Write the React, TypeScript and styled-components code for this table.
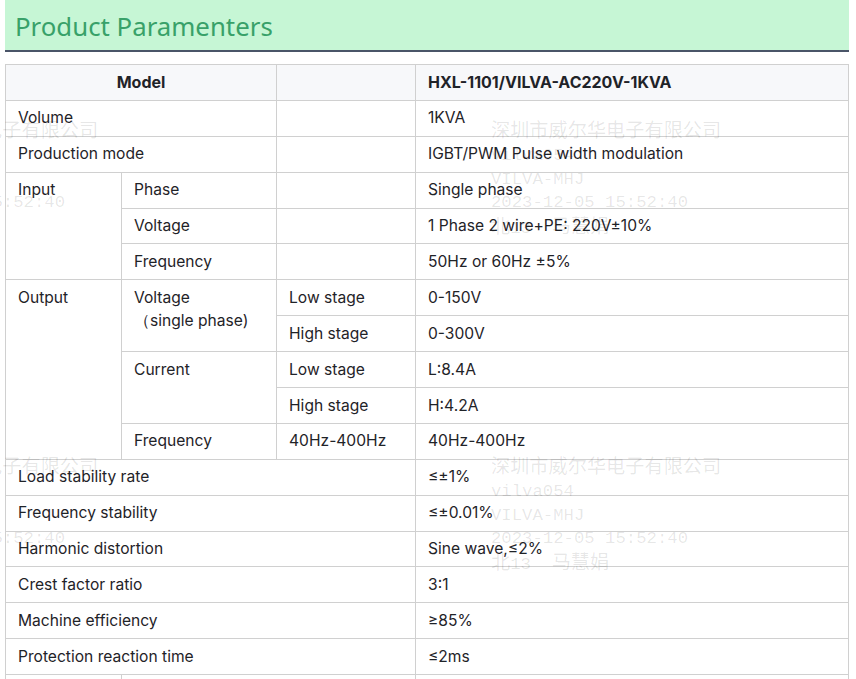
import React from "react";
import styled, { createGlobalStyle } from "styled-components";

const Global = createGlobalStyle`
  html, body { margin: 0; padding: 0; background: #fff; }
  body { font-family: Inter, "Noto Sans", sans-serif; color: #1f2328; }
`;

const Page = styled.div`
  position: relative;
  width: 844px;
  padding: 0 0 0 5px;
  height: 679px;
  overflow: hidden;
`;

const TitleBar = styled.div`
  background: #c6f6d5;
  border-bottom: 2px solid #4a5568;
  height: 50px;
  display: flex;
  align-items: center;
  padding-left: 10px;
  margin-bottom: 12px;
`;

const Title = styled.h2`
  margin: 0;
  font-family: "Noto Sans", sans-serif;
  font-weight: 400;
  font-size: 25.8px;
  color: #38a169;
  line-height: 1;
  padding-top: 4px;
`;

const Table = styled.table`
  width: 843px;
  border-collapse: collapse;
  table-layout: fixed;
  font-size: 15.6px;
`;

const HeadRow = styled.tr`
  background: #f7f8fa;
  font-size: 16px;
`;

const Cell = styled.td<{ $bold?: boolean; $center?: boolean }>`
  border: 1px solid #d0d0d0;
  padding: 5.5px 12px 6.4px 12px;
  line-height: 23px;
  vertical-align: top;
  text-align: ${(p) => (p.$center ? "center" : "left")};
  font-weight: ${(p) => (p.$bold ? 700 : 400)};
  white-space: nowrap;
`;

const Overlay = styled.div`
  position: absolute;
  inset: 0;
  pointer-events: none;
  overflow: hidden;
`;

const Mark = styled.div`
  position: absolute;
  font-family: "Liberation Mono", "Noto Sans CJK SC", monospace;
  font-size: 17.3px;
  line-height: 23.3px;
  color: rgba(0, 0, 0, 0.1);
  white-space: pre;
`;

const Han = styled.span`
  font-family: "Noto Sans CJK SC", sans-serif;
  font-size: 19.2px;
`;

const markLines: React.ReactNode[] = [
  <Han>深圳市威尔华电子有限公司</Han>,
  "vilva054",
  "VILVA-MHJ",
  "2023-12-05 15:52:40",
  <>
    <Han>北</Han>13  <Han>马慧娟</Han>
  </>,
];

const marks: { x: number; y: number }[] = [];
for (let i = 0; i < 2; i++) {
  for (let j = 0; j < 2; j++) {
    marks.push({ x: -132 + i * 623, y: 118 + j * 336 });
  }
}

export default function App() {
  return (
    <>
      <Global />
      <Page>
        <TitleBar>
          <Title>Product Paramenters</Title>
        </TitleBar>
        <Table>
          <colgroup>
            <col style={{ width: 116 }} />
            <col style={{ width: 155 }} />
            <col style={{ width: 139 }} />
            <col style={{ width: 433 }} />
          </colgroup>
          <tbody>
            <HeadRow>
              <Cell colSpan={2} $bold $center>
                Model
              </Cell>
              <Cell />
              <Cell $bold>HXL-1101/VILVA-AC220V-1KVA</Cell>
            </HeadRow>
            <tr>
              <Cell colSpan={2}>Volume</Cell>
              <Cell />
              <Cell>1KVA</Cell>
            </tr>
            <tr>
              <Cell colSpan={2}>Production mode</Cell>
              <Cell />
              <Cell>IGBT/PWM Pulse width modulation</Cell>
            </tr>
            <tr>
              <Cell rowSpan={3}>Input</Cell>
              <Cell>Phase</Cell>
              <Cell />
              <Cell>Single phase</Cell>
            </tr>
            <tr>
              <Cell>Voltage</Cell>
              <Cell />
              <Cell>1 Phase 2 wire+PE: 220V±10%</Cell>
            </tr>
            <tr>
              <Cell>Frequency</Cell>
              <Cell />
              <Cell>50Hz or 60Hz ±5%</Cell>
            </tr>
            <tr>
              <Cell rowSpan={5}>Output</Cell>
              <Cell rowSpan={2}>
                Voltage
                <br />（single phase)
              </Cell>
              <Cell>Low stage</Cell>
              <Cell>0-150V</Cell>
            </tr>
            <tr>
              <Cell>High stage</Cell>
              <Cell>0-300V</Cell>
            </tr>
            <tr>
              <Cell rowSpan={2}>Current</Cell>
              <Cell>Low stage</Cell>
              <Cell>L:8.4A</Cell>
            </tr>
            <tr>
              <Cell>High stage</Cell>
              <Cell>H:4.2A</Cell>
            </tr>
            <tr>
              <Cell>Frequency</Cell>
              <Cell>40Hz-400Hz</Cell>
              <Cell>40Hz-400Hz</Cell>
            </tr>
            <tr>
              <Cell colSpan={3}>Load stability rate</Cell>
              <Cell>≤±1%</Cell>
            </tr>
            <tr>
              <Cell colSpan={3}>Frequency stability</Cell>
              <Cell>≤±0.01%</Cell>
            </tr>
            <tr>
              <Cell colSpan={3}>Harmonic distortion</Cell>
              <Cell>Sine wave,≤2%</Cell>
            </tr>
            <tr>
              <Cell colSpan={3}>Crest factor ratio</Cell>
              <Cell>3:1</Cell>
            </tr>
            <tr>
              <Cell colSpan={3}>Machine efficiency</Cell>
              <Cell>≥85%</Cell>
            </tr>
            <tr>
              <Cell colSpan={3}>Protection reaction time</Cell>
              <Cell>≤2ms</Cell>
            </tr>
            <tr>
              <Cell rowSpan={2}>Environment</Cell>
              <Cell colSpan={2}>Temperature</Cell>
              <Cell>-10℃~40℃</Cell>
            </tr>
            <tr>
              <Cell colSpan={2}>Humidity</Cell>
              <Cell>≤90%</Cell>
            </tr>
          </tbody>
        </Table>
        <Overlay>
          {marks.map((m, k) => (
            <Mark key={k} style={{ left: m.x, top: m.y }}>
              {markLines.map((l, n) => (
                <React.Fragment key={n}>
                  {l}
                  {n < markLines.length - 1 ? "\n" : null}
                </React.Fragment>
              ))}
            </Mark>
          ))}
        </Overlay>
      </Page>
    </>
  );
}
